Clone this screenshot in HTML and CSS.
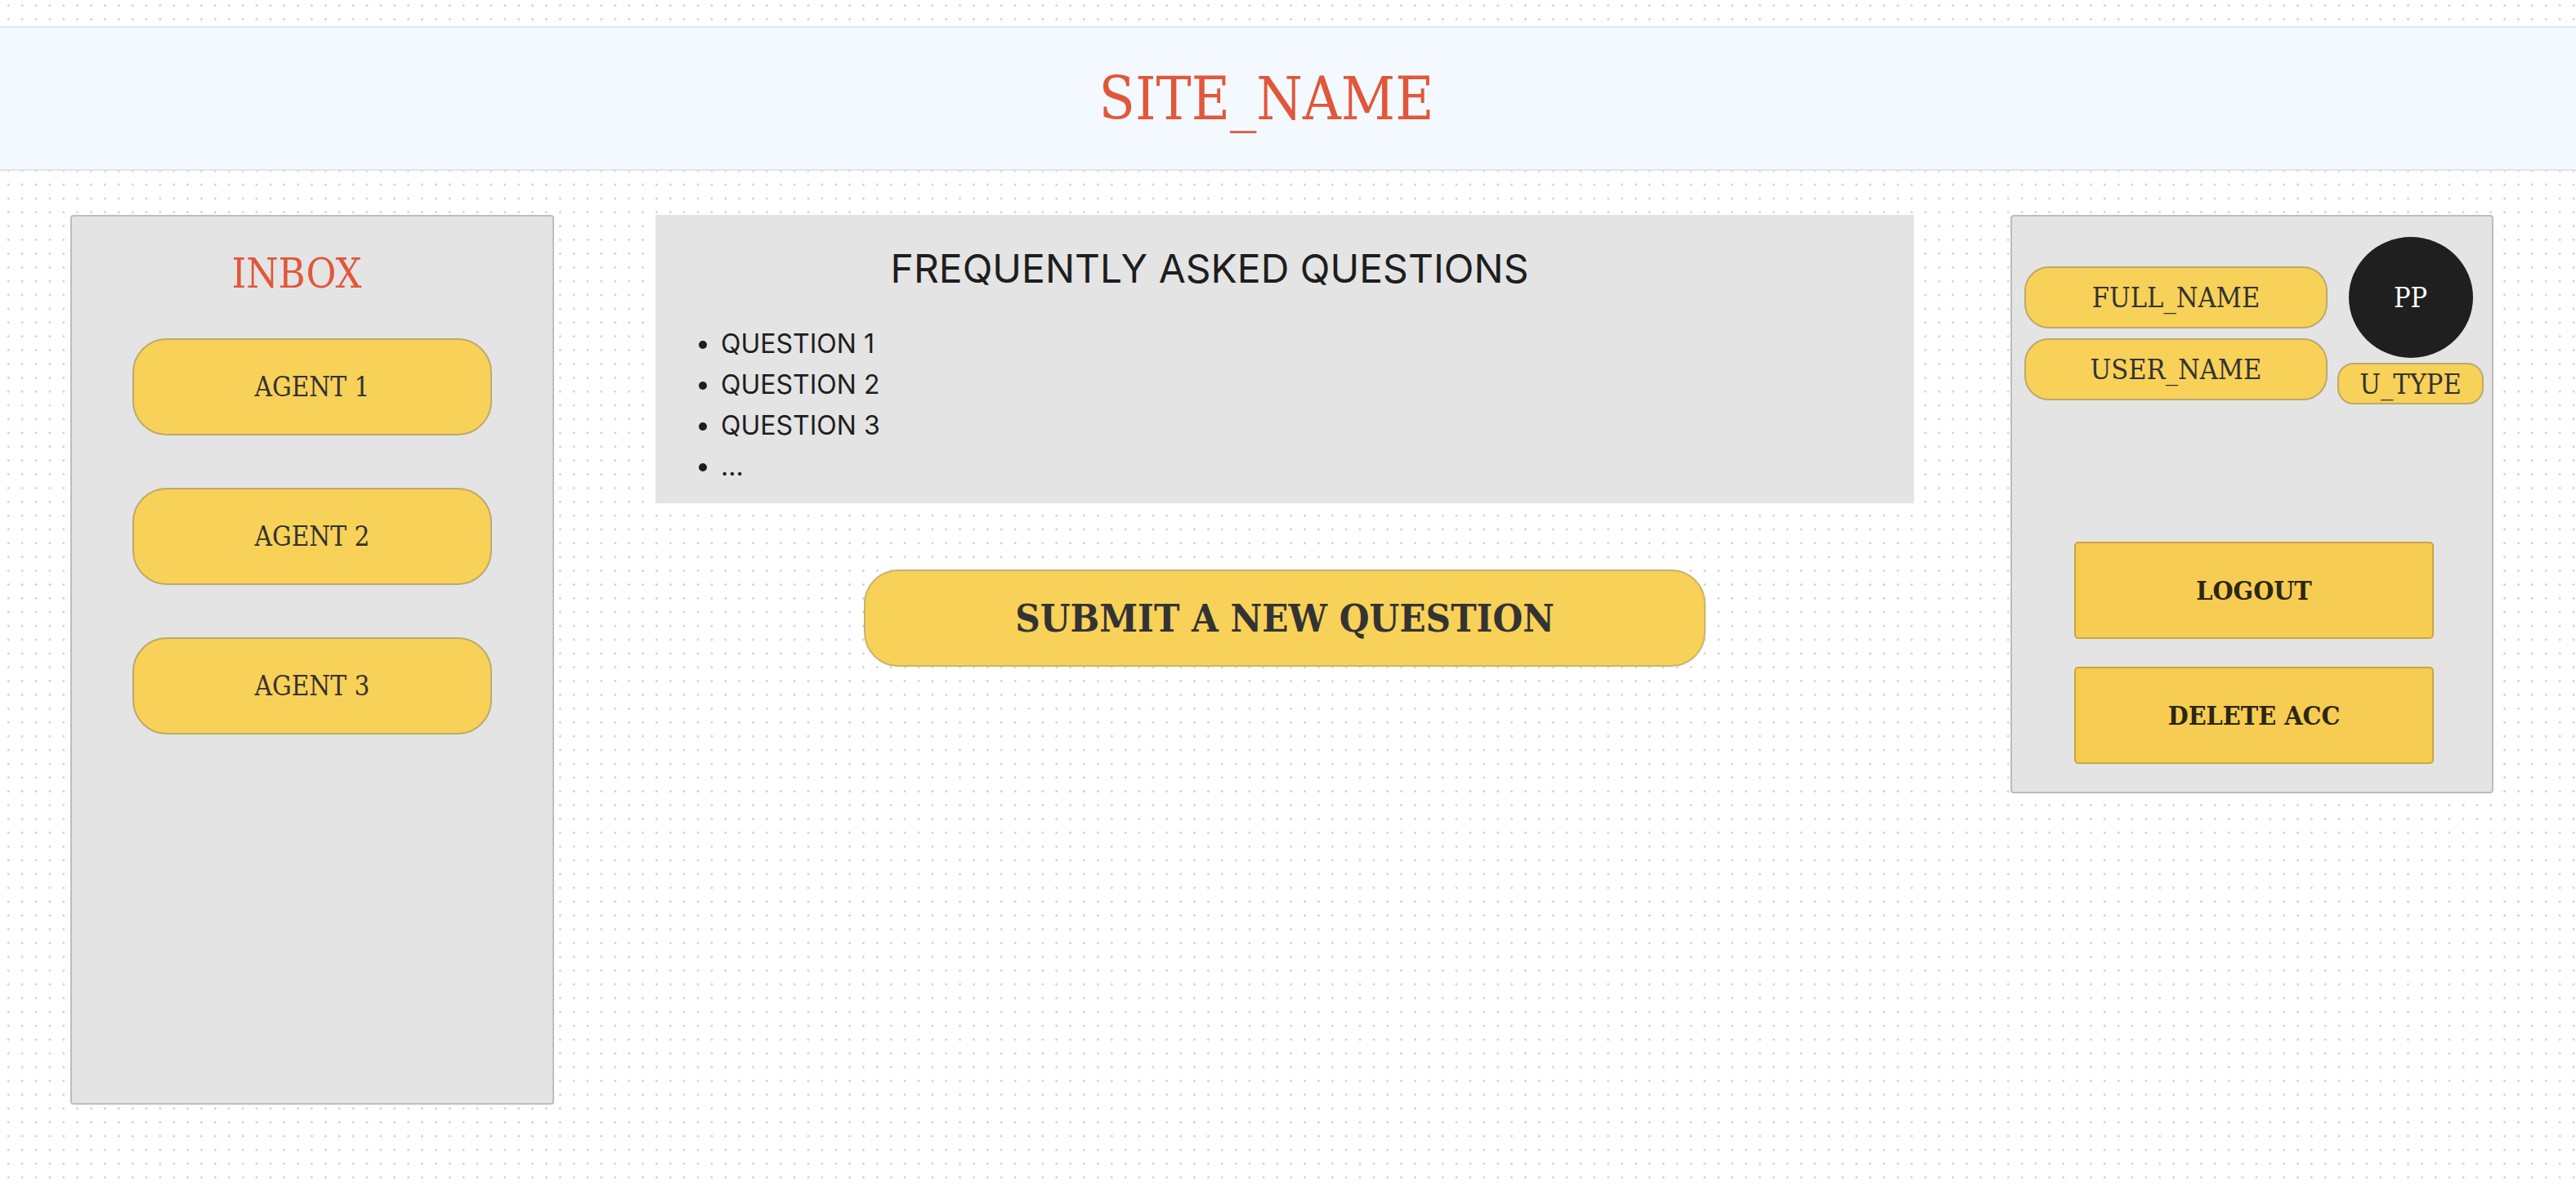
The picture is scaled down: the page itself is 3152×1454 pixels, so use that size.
FILE: index.html
```html
<!DOCTYPE html>
<html lang="en">
<head>
<meta charset="utf-8">
<title>SITE_NAME</title>
<link rel="stylesheet" href="styles.css">
</head>
<body>
<header class="site-header">
  <h1 class="site-title">SITE_NAME</h1>
</header>
<main class="layout">
  <aside class="panel inbox">
    <h2 class="inbox-title">INBOX</h2>
    <div class="agent-list">
      <button class="agent">AGENT 1</button>
      <button class="agent">AGENT 2</button>
      <button class="agent">AGENT 3</button>
    </div>
  </aside>
  <section class="center">
    <div class="faq">
      <h2 class="faq-title">FREQUENTLY ASKED QUESTIONS</h2>
      <ul class="faq-list">
        <li>QUESTION 1</li>
        <li>QUESTION 2</li>
        <li>QUESTION 3</li>
        <li>...</li>
      </ul>
    </div>
    <button class="submit">SUBMIT A NEW QUESTION</button>
  </section>
  <aside class="panel profile">
    <div class="profile-top">
      <div class="name-pills">
        <div class="pill">FULL_NAME</div>
        <div class="pill">USER_NAME</div>
      </div>
      <div class="avatar-col">
        <div class="avatar">PP</div>
        <div class="pill type-pill">U_TYPE</div>
      </div>
    </div>
    <div class="actions">
      <button class="action">LOGOUT</button>
      <button class="action">DELETE ACC</button>
    </div>
  </aside>
</main>
</body>
</html>
```
FILE: styles.css
```css
* { box-sizing: border-box; }

html, body {
  margin: 0;
  padding: 0;
}

body {
  min-height: 100vh;
  background-color: #ffffff;
  background-image: radial-gradient(circle, #cccccc 1px, transparent 1.5px);
  background-size: 16.89px 16.89px;
  background-position: 1.85px 15.14px;
  font-family: "DejaVu Serif Condensed", "DejaVu Serif", serif;
  font-stretch: condensed;
  color: #333333;
}

button {
  font: inherit;
  font-stretch: condensed;
  cursor: pointer;
  padding: 0;
  margin: 0;
}

.site-header {
  margin-top: 32px;
  height: 177px;
  border-top: 2px solid #d6e6f6;
  border-bottom: 2px solid #d6e6f6;
  background: #f4f9ff;
  display: flex;
  align-items: center;
  justify-content: center;
  padding-right: 53px;
}

.site-title {
  margin: 0;
  font-size: 72px;
  font-weight: 400;
  color: #e1573a;
  line-height: normal;
}

.layout {
  display: flex;
  align-items: flex-start;
  padding: 54px 0 0 86px;
}

.panel {
  background: #e4e4e4;
  border: 2px solid #bdbdbd;
  border-radius: 4px;
}

.inbox {
  width: 592px;
  height: 1089px;
  padding-top: 41px;
}

.inbox-title {
  margin: 0;
  font-size: 50px;
  line-height: 58px;
  font-weight: 400;
  color: #e1573a;
  text-align: center;
  padding-right: 38px;
}

.agent-list {
  margin-top: 50px;
  display: flex;
  flex-direction: column;
  align-items: center;
  gap: 64px;
}

.agent {
  width: 440px;
  height: 119px;
  border: 2px solid #bcaa6c;
  border-radius: 42px;
  background: #f8d158;
  color: #333333;
  font-size: 33px;
}

.center {
  width: 1540px;
  margin: 0 118px 0 124px;
  display: flex;
  flex-direction: column;
}

.faq {
  height: 353px;
  background: #e4e4e4;
  padding-top: 37px;
  font-family: Inter, "Noto Sans", sans-serif;
  font-stretch: normal;
  color: #1e1e1e;
}

.faq-title {
  margin: 0;
  font-size: 48px;
  line-height: 58px;
  font-weight: 400;
  text-align: center;
  padding-right: 184px;
}

.faq-list {
  margin: 38px 0 0;
  padding-left: 80px;
  font-size: 32px;
  line-height: 50px;
}

.submit {
  align-self: center;
  margin-top: 81px;
  width: 1030px;
  height: 119px;
  border: 2px solid #c9b46e;
  border-radius: 42px;
  background: #f8d158;
  color: #333333;
  font-size: 47px;
  font-weight: 700;
}

.profile {
  width: 591px;
  padding: 25px 10px 34px 15px;
}

.profile-top {
  display: flex;
  align-items: flex-start;
  gap: 12px;
}

.name-pills {
  width: 371px;
  margin-top: 36px;
  display: flex;
  flex-direction: column;
  gap: 12px;
}

.pill {
  height: 76px;
  border: 2px solid #bcaa6c;
  border-radius: 30px;
  background: #f8d158;
  color: #333333;
  font-size: 34px;
  display: flex;
  align-items: center;
  justify-content: center;
}

.avatar-col {
  width: 179px;
  display: flex;
  flex-direction: column;
  align-items: center;
  gap: 6px;
}

.avatar {
  width: 152px;
  height: 148px;
  border-radius: 50%;
  background: #1f1f1f;
  color: #ffffff;
  font-size: 34px;
  display: flex;
  align-items: center;
  justify-content: center;
}

.type-pill {
  width: 179px;
  height: 51px;
  border-radius: 20px;
}

.actions {
  margin-top: 168px;
  display: flex;
  flex-direction: column;
  align-items: center;
  gap: 34px;
}

.action {
  width: 440px;
  height: 119px;
  border: 2px solid #c9a63f;
  border-radius: 5px;
  background: #f7cc52;
  color: #2c2712;
  font-size: 32px;
  font-weight: 700;
}
```
